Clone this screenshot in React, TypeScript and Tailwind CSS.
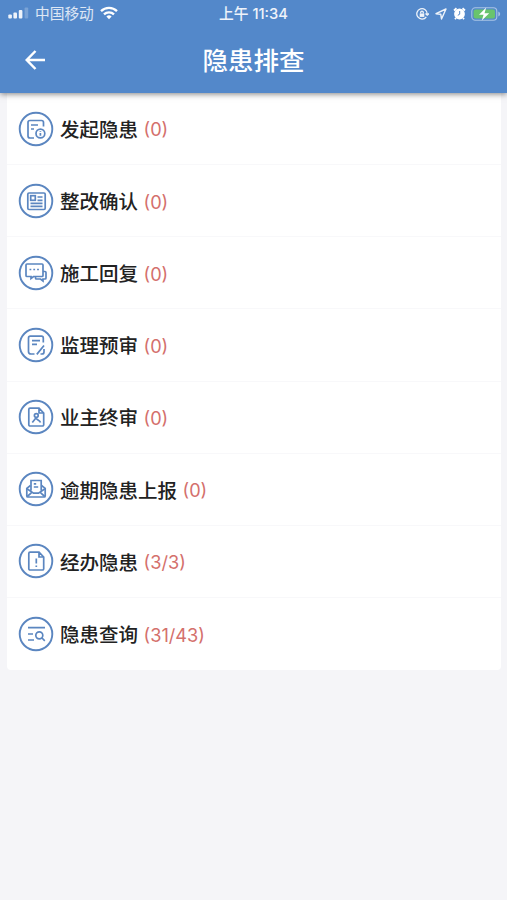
import React from 'react'

const rows = [
  {
    title: '发起隐患',
    count: '(0)',
    icon: (
      <>
        <path d="M16 27H12a2 2 0 0 1-2-2V11.500a2 2 0 0 1 2-2h11.500a2 2 0 0 1 2 2V15.500M13 14h7M13 18h3" />
        <circle cx="22.400" cy="22.500" r="4.400" />
        <path d="M22.400 22v2.800M22.400 19.900v.8" />
      </>
    ),
  },
  {
    title: '整改确认',
    count: '(0)',
    icon: (
      <>
        <rect x="9.800" y="10" width="17.400" height="16.500" rx="1.200" />
        <rect x="12.700" y="12.700" width="4.600" height="4.600" />
        <path d="M19.500 14h5M19.500 17.300h5M12.500 20.300h12M12.500 23.400h12" />
      </>
    ),
  },
  {
    title: '施工回复',
    count: '(0)',
    icon: (
      <>
        <path d="M9 9h15a1 1 0 0 1 1 1v10.500a1 1 0 0 1-1 1h-8.500l-2.500 2v-2H9a1 1 0 0 1-1-1V10a1 1 0 0 1 1-1z" />
        <path d="M25 16.500h2a1 1 0 0 1 1 1V23a1 1 0 0 1-1 1h-2v2l-2.500-2H18.500a1 1 0 0 1-1-1v-1.500" />
        <path d="M11.500 14.500h1.800M15.300 14.500h1.800M19.100 14.500h1.800" />
      </>
    ),
  },
  {
    title: '监理预审',
    count: '(0)',
    icon: (
      <>
        <path d="M16.500 27H13a2.500 2.500 0 0 1-2.500-2.500V11a1.800 1.800 0 0 1 1.800-1.800h11.200a1.800 1.800 0 0 1 1.800 1.800v4.500M14 13.700h8M14 17.400h5" />
        <path d="M26 18.500L18.800 27.400M26 22v3a2 2 0 0 1-2 2h-1.500" />
      </>
    ),
  },
  {
    title: '业主终审',
    count: '(0)',
    icon: (
      <>
        <path d="M21 9.200H12a1.200 1.200 0 0 0-1.200 1.200v15.400A1.200 1.200 0 0 0 12 27h12.500a1.200 1.200 0 0 0 1.200-1.200V14zM21 9.200V14h4.700" />
        <circle cx="18.300" cy="16.500" r="1.900" />
        <path d="M18.300 18.400L14.300 23.500M18.500 19.500c.4 1.500 3.300 1.500 4 4" />
      </>
    ),
  },
  {
    title: '逾期隐患上报',
    count: '(0)',
    icon: (
      <>
        <path d="M12.500 14.500L8.800 17.300V25a1 1 0 0 0 1 1h16.400a1 1 0 0 0 1-1v-7.700L23.500 14.500" />
        <path d="M13 19.500V9.500h10.200v10M9 17.800l6.500 4.400h5l6.500-4.400M9.300 25.500l4.200-3.800M26.700 25.500l-4.200-3.800M15.800 12.800h2.400M15.800 16h4.400" />
      </>
    ),
  },
  {
    title: '经办隐患',
    count: '(3/3)',
    icon: (
      <>
        <path d="M21 9.200H12a1.200 1.200 0 0 0-1.200 1.200v15.400A1.200 1.200 0 0 0 12 27h12.500a1.200 1.200 0 0 0 1.200-1.200V14zM21 9.200V14h4.700" />
        <path d="M18.300 15.500v5M18.300 22.500v1.500" />
      </>
    ),
  },
  {
    title: '隐患查询',
    count: '(31/43)',
    icon: (
      <>
        <path d="M10 11.700h17M10 18h5M10 24h6" />
        <circle cx="21.300" cy="19.300" r="3.500" />
        <path d="M24 22l2.800 2.800" />
      </>
    ),
  },
]

function StatusBar() {
  return (
    <div className="grid h-[27px] grid-cols-3 items-center text-white/90">
      <div className="flex items-center pl-2">
        <svg width="22" height="12" viewBox="0 0 22 12" fill="currentColor">
          <rect x="0.300" y="7.500" width="3.600" height="4" rx="1" />
          <rect x="5.400" y="5.500" width="3.600" height="6" rx="1" />
          <rect x="10.800" y="3" width="3.600" height="8.500" rx="1" />
          <rect x="16.600" y="0.500" width="3.600" height="11" rx="1" opacity="0.25" />
        </svg>
        <span className="ml-[5px] pt-[2px] text-[14.700px] leading-none whitespace-nowrap text-white/80">中国移动</span>
        <svg className="ml-[6px]" width="18" height="14" viewBox="0 0 18 14" fill="none" stroke="white" strokeWidth="2.300">
          <path d="M1 5.200a11.500 11.500 0 0 1 16 0M4 8.400a7.200 7.200 0 0 1 10 0" />
          <path d="M9 13.200l-2.600-2.700a3.700 3.700 0 0 1 5.200 0z" fill="white" stroke="none" />
        </svg>
      </div>
      <div className="pt-[2px] text-center text-[14.700px] leading-none font-medium whitespace-nowrap">上午 11:34</div>
      <div className="flex items-center justify-end pr-[6px]">
        <svg width="14" height="14" viewBox="0 0 14 14" fill="none" stroke="currentColor" strokeWidth="1.300">
          <path d="M11.300 9.800A5.200 5.200 0 1 1 12.200 7M10.500 6.500l1.700 1.700L14 6.500" />
          <rect x="4.700" y="6.500" width="4.600" height="3.400" fill="currentColor" stroke="none" />
          <path d="M5.700 6.500V5.400a1.300 1.300 0 0 1 2.600 0v1.100" />
        </svg>
        <svg className="ml-[6px]" width="12" height="12" viewBox="0 0 12 12" fill="none" stroke="currentColor" strokeWidth="1.400" strokeLinejoin="round">
          <path d="M1 5.700L11 1 6.500 11 5.800 6.300z" />
        </svg>
        <svg className="ml-[6px]" width="13" height="13" viewBox="0 0 13 13">
          <circle cx="6.500" cy="7" r="5.400" fill="white" />
          <path d="M1 3.500L3.500 1.300M12 3.500L9.500 1.300M3 11l-1 1.300M10 11l1 1.300" stroke="white" strokeWidth="1.800" />
          <path d="M6.700 4v3.200L4.800 8.300" stroke="#5388ca" strokeWidth="1" fill="none" />
        </svg>
        <svg className="ml-[5px]" width="30" height="14" viewBox="0 0 30 14">
          <rect x="0.800" y="0.800" width="25" height="12.400" rx="3.500" fill="none" stroke="#a9c4e5" strokeWidth="1.100" />
          <rect x="2.600" y="2.500" width="21.400" height="9" rx="2" fill="#69c46d" />
          <path d="M27.300 4.500v5a2.600 2.600 0 0 0 0-5z" fill="#a9c4e5" />
          <path d="M15.200 0.500L8 7.800h4.600L10.800 13.500 18.200 6.200h-4.700z" fill="white" />
        </svg>
      </div>
    </div>
  )
}

function App() {
  return (
    <div className="flex h-[900px] w-[507px] flex-col overflow-hidden bg-[#f5f5f8] font-[Inter,'Noto_Sans_CJK_SC',sans-serif]">
      <header className="relative h-[93px] shrink-0 bg-[#5388ca] shadow-[0_1px_6px_rgba(0,0,0,0.5)]">
        <StatusBar />
        <div className="grid h-[66px] grid-cols-[70px_1fr_70px] items-center text-white">
          <svg className="ml-[25px]" width="21" height="20" viewBox="0 0 21 20" fill="none" stroke="white" strokeWidth="2.500">
            <path d="M20 10H2M10.500 1L1.700 10l8.800 9" />
          </svg>
          <h1 className="pt-[2px] text-center text-[25.500px] leading-none font-medium">隐患排查</h1>
        </div>
      </header>

      <main className="mr-[6px] ml-[7px] rounded-b bg-white">
        {rows.map((row) => (
          <div key={row.title} className="flex h-[72.150px] items-center border-b border-[#f8f8fa] pl-[11px] last:border-b-0">
            <svg className="shrink-0" width="36" height="36" viewBox="0 0 36 36" fill="none" stroke="#5b86c0" strokeWidth="1.700">
              <circle cx="18" cy="18" r="16.300" strokeWidth="1.900" />
              {row.icon}
            </svg>
            <span className="ml-[6px] pt-[4px] text-[19.500px] leading-none font-medium text-[#222]">{row.title}</span>
            <span className="ml-[5.500px] pt-[2px] text-[18.200px] leading-none text-[#d4706c]">{row.count}</span>
          </div>
        ))}
      </main>
    </div>
  )
}

export default App
